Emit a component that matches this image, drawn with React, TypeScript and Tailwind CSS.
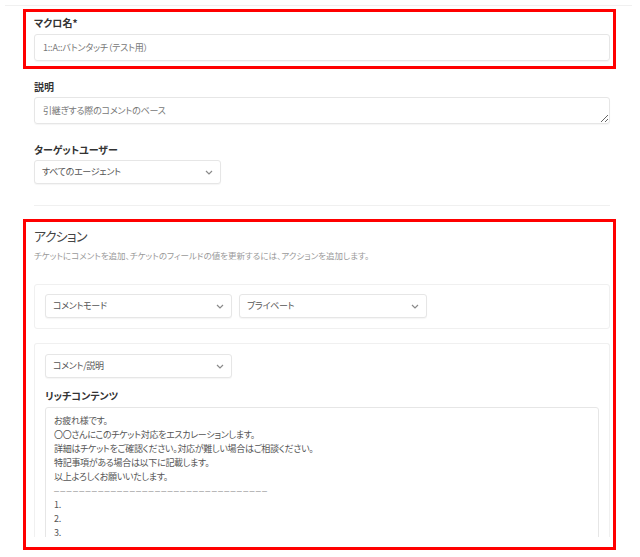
import { ReactNode } from "react";

const jp = "font-['Noto_Sans_CJK_JP','Noto_Sans',sans-serif] [font-feature-settings:'palt']";

function Chevron() {
  return (
    <svg width="8" height="5" viewBox="0 0 8 5" className="shrink-0">
      <path d="M1 1 L4 4 L7 1" fill="none" stroke="#8a8a8a" strokeWidth="1.2" />
    </svg>
  );
}

function Select({ value, width }: { value: string; width: string }) {
  return (
    <div
      className={`${width} h-[24px] flex items-center justify-between pl-[7px] pr-[7px] border border-[#e6e6e6] rounded-[3px] shadow-[0_1px_1px_rgba(0,0,0,0.04)] text-[9px] tracking-[-0.3px] text-[#555] bg-white`}
    >
      <span>{value}</span>
      <Chevron />
    </div>
  );
}

function Label({ children, className = "" }: { children: ReactNode; className?: string }) {
  return (
    <div className={`text-[10px] leading-[14px] font-bold text-[#333] ${className}`}>
      {children}
    </div>
  );
}

const richLines = [
  "お疲れ様です。",
  "〇〇さんにこのチケット対応をエスカレーションします。",
  "詳細はチケットをご確認ください。対応が難しい場合はご相談ください。",
  "特記事項がある場合は以下に記載します。",
  "以上よろしくお願いいたします。",
];

export default function App() {
  return (
    <div className={`w-[640px] h-[557px] overflow-hidden bg-white ${jp}`}>
      <div className="pt-[5px]">
        <div className="ml-[5px] mr-[8px] border-t border-[#f0f0f0]" />
      </div>

      <div className="pl-[23px] pr-[24px]">
        {/* マクロ名 */}
        <div className="mt-[3px] border-[3px] border-[#ff0000] pl-[8px] pr-[3px] pt-[4px] pb-[5px]">
          <Label className="mb-[4px]">マクロ名*</Label>
          <div className="h-[27px] flex items-center pl-[8px] border border-[#e6e6e6] rounded-[3px] shadow-[0_1px_1px_rgba(0,0,0,0.04)] text-[9px] tracking-[-0.2px] text-[#777]">
            1::A::バトンタッチ（テスト用）
          </div>
        </div>

        <div className="pl-[11px] pr-[6px]">
          {/* 説明 */}
          <Label className="mt-[11px] mb-[3px]">説明</Label>
          <textarea
            className={`block w-full h-[27px] pl-[8px] pt-[6px] leading-[14px] border border-[#e6e6e6] rounded-[3px] shadow-[0_1px_1px_rgba(0,0,0,0.04)] text-[9px] tracking-[-0.2px] placeholder:text-[#777] outline-none ${jp}`}
            placeholder="引継ぎする際のコメントのベース"
          />

          {/* ターゲットユーザー */}
          <Label className="mt-[19px] mb-[3px]">ターゲットユーザー</Label>
          <Select value="すべてのエージェント" width="w-[187px]" />

          <div className="mt-[21px] border-t border-[#f0f0f0]" />
        </div>

        {/* アクション */}
        <div className="mt-[13px] border-[3px] border-[#ff0000] pl-[8px] pr-[3px] pt-[4px] pb-[10px]">
          <h2 className="text-[13px] leading-[20px] tracking-[-0.7px] text-[#444]">アクション</h2>
          <p className="mt-[2px] text-[8.5px] leading-[14px] text-[#9a9a9a]">
            チケットにコメントを追加、チケットのフィールドの値を更新するには、アクションを追加します。
          </p>

          <div className="mt-[22px] border border-[#f0f0f0] rounded-[3px] pl-[10px] pr-[10px] pt-[9px] pb-[10px] flex gap-[7px]">
            <Select value="コメントモード" width="w-[187px]" />
            <Select value="プライベート" width="w-[188px]" />
          </div>

          <div className="mt-[14px] h-[194px] overflow-hidden border border-b-0 border-[#f0f0f0] rounded-t-[3px] pl-[10px] pr-[10px] pt-[10px]">
            <Select value="コメント/説明" width="w-[187px]" />
            <Label className="mt-[11px] mb-[4px]">リッチコンテンツ</Label>
            <div className="border border-[#e6e6e6] rounded-[3px] pl-[8px] pt-[6px] pb-[10px] text-[9px] tracking-[-0.3px] leading-[14px] text-[#555]">
              {richLines.map((l) => (
                <div key={l}>{l}</div>
              ))}
              <div className="font-['Liberation_Sans',sans-serif] text-[9px] tracking-[1.3px] leading-[14px] text-[#999]">
                ––––––––––––––––––––––––––––––––––
              </div>
              <div>1.</div>
              <div>2.</div>
              <div>3.</div>
            </div>
          </div>
        </div>
      </div>
    </div>
  );
}
